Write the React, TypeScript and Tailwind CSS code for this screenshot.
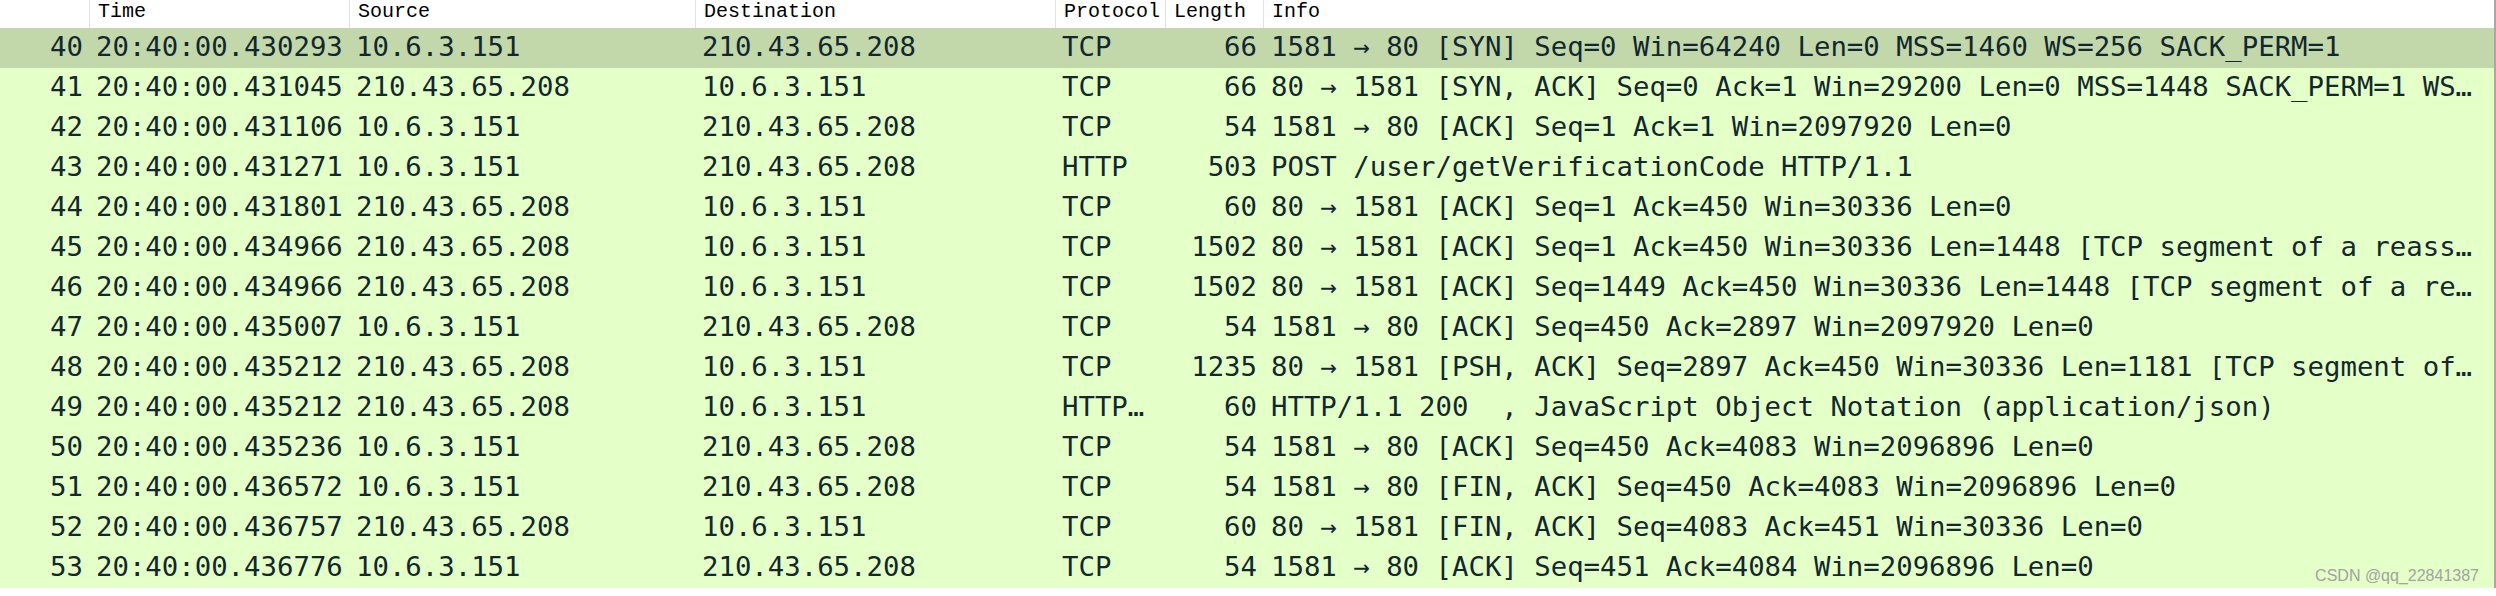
import React from 'react';

type Packet = {
    no: number;
    time: string;
    source: string;
    destination: string;
    protocol: string;
    length: number;
    info: string;
    selected?: boolean;
};

const packets: Packet[] = [
    { no: 40, time: '20:40:00.430293', source: '10.6.3.151', destination: '210.43.65.208', protocol: 'TCP', length: 66, info: '1581 → 80 [SYN] Seq=0 Win=64240 Len=0 MSS=1460 WS=256 SACK_PERM=1', selected: true },
    { no: 41, time: '20:40:00.431045', source: '210.43.65.208', destination: '10.6.3.151', protocol: 'TCP', length: 66, info: '80 → 1581 [SYN, ACK] Seq=0 Ack=1 Win=29200 Len=0 MSS=1448 SACK_PERM=1 WS…' },
    { no: 42, time: '20:40:00.431106', source: '10.6.3.151', destination: '210.43.65.208', protocol: 'TCP', length: 54, info: '1581 → 80 [ACK] Seq=1 Ack=1 Win=2097920 Len=0' },
    { no: 43, time: '20:40:00.431271', source: '10.6.3.151', destination: '210.43.65.208', protocol: 'HTTP', length: 503, info: 'POST /user/getVerificationCode HTTP/1.1' },
    { no: 44, time: '20:40:00.431801', source: '210.43.65.208', destination: '10.6.3.151', protocol: 'TCP', length: 60, info: '80 → 1581 [ACK] Seq=1 Ack=450 Win=30336 Len=0' },
    { no: 45, time: '20:40:00.434966', source: '210.43.65.208', destination: '10.6.3.151', protocol: 'TCP', length: 1502, info: '80 → 1581 [ACK] Seq=1 Ack=450 Win=30336 Len=1448 [TCP segment of a reass…' },
    { no: 46, time: '20:40:00.434966', source: '210.43.65.208', destination: '10.6.3.151', protocol: 'TCP', length: 1502, info: '80 → 1581 [ACK] Seq=1449 Ack=450 Win=30336 Len=1448 [TCP segment of a re…' },
    { no: 47, time: '20:40:00.435007', source: '10.6.3.151', destination: '210.43.65.208', protocol: 'TCP', length: 54, info: '1581 → 80 [ACK] Seq=450 Ack=2897 Win=2097920 Len=0' },
    { no: 48, time: '20:40:00.435212', source: '210.43.65.208', destination: '10.6.3.151', protocol: 'TCP', length: 1235, info: '80 → 1581 [PSH, ACK] Seq=2897 Ack=450 Win=30336 Len=1181 [TCP segment of…' },
    { no: 49, time: '20:40:00.435212', source: '210.43.65.208', destination: '10.6.3.151', protocol: 'HTTP…', length: 60, info: 'HTTP/1.1 200  , JavaScript Object Notation (application/json)' },
    { no: 50, time: '20:40:00.435236', source: '10.6.3.151', destination: '210.43.65.208', protocol: 'TCP', length: 54, info: '1581 → 80 [ACK] Seq=450 Ack=4083 Win=2096896 Len=0' },
    { no: 51, time: '20:40:00.436572', source: '10.6.3.151', destination: '210.43.65.208', protocol: 'TCP', length: 54, info: '1581 → 80 [FIN, ACK] Seq=450 Ack=4083 Win=2096896 Len=0' },
    { no: 52, time: '20:40:00.436757', source: '210.43.65.208', destination: '10.6.3.151', protocol: 'TCP', length: 60, info: '80 → 1581 [FIN, ACK] Seq=4083 Ack=451 Win=30336 Len=0' },
    { no: 53, time: '20:40:00.436776', source: '10.6.3.151', destination: '210.43.65.208', protocol: 'TCP', length: 54, info: '1581 → 80 [ACK] Seq=451 Ack=4084 Win=2096896 Len=0' },
];

const headers = ['', 'Time', 'Source', 'Destination', 'Protocol', 'Length', 'Info'];

const cols = 'grid grid-cols-[89px_260px_346px_360px_110px_98px_1fr]';

export default function App() {
    return (
        <div className="relative w-[2496px] h-[596px] bg-white overflow-hidden">
            <div className="w-[2496px] border-r-2 border-[#a8a8a8]">
                <div className={`${cols} h-[28px] bg-white text-black font-['Liberation_Mono',monospace] text-[20px] leading-[20px]`}>
                    {headers.map((h, i) => (
                        <div key={i} className={`pt-[2px] pl-[8px] whitespace-pre overflow-hidden ${i > 0 ? 'border-l border-[#e3e3e3]' : ''}`}>
                            {h}
                        </div>
                    ))}
                </div>

                <div className="font-['DejaVu_Sans_Mono',monospace] text-[27.33px] leading-[37px] text-[#12272e]">
                    {packets.map((p) => (
                        <div
                            key={p.no}
                            className={`${cols} h-[40px] ${p.selected ? 'bg-[#c3d8aa]' : 'bg-[#e4ffc7]'}`}
                        >
                            <div className="text-right pr-[6px] whitespace-pre overflow-hidden">{p.no}</div>
                            <div className="pl-[7px] whitespace-pre overflow-hidden">{p.time}</div>
                            <div className="pl-[7px] whitespace-pre overflow-hidden">{p.source}</div>
                            <div className="pl-[7px] whitespace-pre overflow-hidden">{p.destination}</div>
                            <div className="pl-[7px] whitespace-pre overflow-hidden">{p.protocol}</div>
                            <div className="text-right pr-[6px] whitespace-pre overflow-hidden">{p.length}</div>
                            <div className="pl-[8px] whitespace-pre overflow-hidden">{p.info}</div>
                        </div>
                    ))}
                </div>
            </div>

            <span className="absolute right-[17px] top-[566px] font-['Liberation_Sans',Arial,sans-serif] text-[16px] leading-[20px] text-[#a3a3a3]">
                CSDN @qq_22841387
            </span>
        </div>
    );
}
